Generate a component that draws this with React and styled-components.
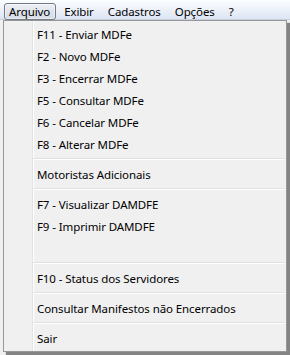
import React from "react";
import styled, { createGlobalStyle } from "styled-components";

const GlobalStyle = createGlobalStyle`
  body {
    margin: 0;
    background: #f0f0f0;
    font-family: "Noto Sans", "DejaVu Sans", sans-serif;
    font-size: 11.5px;
    letter-spacing: -0.1px;
    color: #000;
  }
`;

const Window = styled.div`
  width: 290px;
  height: 355px;
  overflow: hidden;
  background: #f0f0f0;
`;

const MenuBar = styled.div`
  height: 20px;
  box-sizing: border-box;
  display: flex;
  align-items: flex-start;
  gap: 3px;
  padding: 3px 0 0 4px;
  background: linear-gradient(#fcfdfe 0%, #eef2f9 45%, #dde6f4 100%);
  border-bottom: 1px solid #c9d0da;
`;

const BarItem = styled.div`
  height: 17px;
  box-sizing: border-box;
  display: flex;
  align-items: center;
  padding: 0 5px 1px 4px;
  border: 1px solid ${(p) => (p.$open ? "#727a85" : "transparent")};
  border-radius: 3px;
  background: ${(p) =>
    p.$open ? "linear-gradient(#eef1f5, #dfe4eb 50%, #d6dce5)" : "transparent"};
  box-shadow: ${(p) => (p.$open ? "inset 0 0 0 1px rgba(255,255,255,0.5)" : "none")};
`;

const DropMenu = styled.div`
  margin-left: 3px;
  width: 284px;
  box-sizing: border-box;
  border: 1px solid #979797;
  padding: 2px;
  background-color: #f0f0f0;
  background-image: linear-gradient(
    to right,
    transparent 28px,
    #e2e3e3 28px,
    #e2e3e3 29px,
    #ffffff 29px,
    #ffffff 30px,
    transparent 30px
  );
  box-shadow: 3px 3px 1px rgba(0, 0, 0, 0.45);
`;

const Item = styled.div`
  height: 22px;
  display: flex;
  align-items: center;
  padding-left: 31px;
  white-space: nowrap;
  color: #000;
`;

const Separator = styled.div`
  height: 8px;
  margin-left: 27px;
  display: flex;
  align-items: center;
  &::after {
    content: "";
    flex: 1;
    height: 0;
    border-top: 1px solid #e0e0e0;
    border-bottom: 1px solid #ffffff;
  }
`;

const bar = ["Arquivo", "Exibir", "Cadastros", "Opções", "?"];

const entries = [
  "F11 - Enviar MDFe",
  "F2 - Novo MDFe",
  "F3 - Encerrar MDFe",
  "F5 - Consultar MDFe",
  "F6 - Cancelar MDFe",
  "F8 - Alterar MDFe",
  "-",
  "Motoristas Adicionais",
  "-",
  "F7 - Visualizar DAMDFE",
  "F9 - Imprimir DAMDFE",
  "",
  "-",
  "F10 - Status dos Servidores",
  "-",
  "Consultar Manifestos não Encerrados",
  "-",
  "Sair",
];

export default function App() {
  return (
    <Window>
      <GlobalStyle />
      <MenuBar>
        {bar.map((label, i) => (
          <BarItem key={label} $open={i === 0}>
            {label}
          </BarItem>
        ))}
      </MenuBar>
      <DropMenu>
        {entries.map((e, i) =>
          e === "-" ? <Separator key={i} /> : <Item key={i}>{e}</Item>
        )}
      </DropMenu>
    </Window>
  );
}
